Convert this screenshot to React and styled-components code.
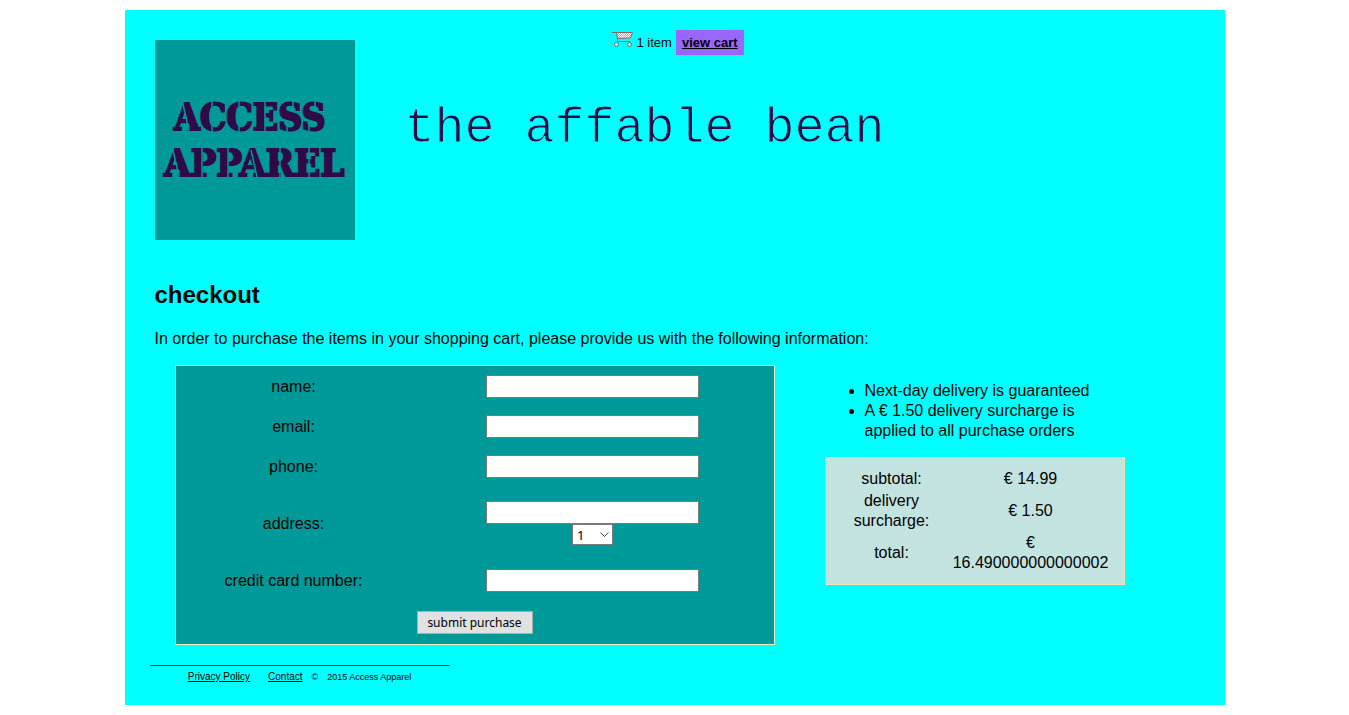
import React from 'react';
import styled, { createGlobalStyle } from 'styled-components';

const GlobalStyle = createGlobalStyle`
  body {
    margin: 10px;
    background: #fff;
    color: #000;
    font: 16px/20px "Liberation Sans", Arial, sans-serif;
  }
`;

const Page = styled.div`
  max-width: 1100px;
  margin: 0 auto;
  background: #00ffff;
`;

const Header = styled.header`
  display: flex;
  gap: 50px;
  padding: 20px 30px 0;
`;

const LogoLink = styled.a`
  flex: none;
  margin-top: 10px;
  height: 200px;
  svg { display: block; }
`;

const Banner = styled.div`
  flex: 1;
`;

const CartBar = styled.div`
  display: flex;
  align-items: center;
  gap: 4px;
  padding-left: 207px;
  font-size: 13px;
  line-height: 15px;
`;

const CartIcon = styled.svg`
  margin-bottom: 6px;
`;

const ViewCart = styled.a`
  padding: 5px 6px;
  background: #9966ff;
  color: #000;
  font-weight: bold;
`;

const SiteName = styled.h1`
  margin: 44px 0 0;
  font: 50px/60px "Liberation Mono", "Courier New", monospace;
  color: #2e0a46;
  -webkit-text-stroke: 1px #00ffff;
  white-space: nowrap;
`;

const Content = styled.main`
  padding: 41px 30px 0;
`;

const Heading = styled.h2`
  margin: 0 0 20px;
  font-size: 24px;
  line-height: 28px;
`;

const Intro = styled.p`
  margin: 0 0 16px;
`;

const Columns = styled.div`
  display: flex;
  align-items: flex-start;
  gap: 50px;
  margin-left: 20px;
`;

const CheckoutForm = styled.form`
  box-sizing: border-box;
  flex: 0 1 600px;
  border: 1px solid #f5eabe;
  background: #009999;
`;

const FormTable = styled.table`
  width: 100%;
  border-collapse: collapse;
  table-layout: fixed;
  td { padding: 0; text-align: center; }
  td + td { padding-bottom: 1px; }
`;

const LabelColumn = styled.col`
  width: 236px;
`;

const FormRow = styled.tr`
  height: ${({ $height }) => $height || 40}px;
`;

const TextInput = styled.input`
  box-sizing: border-box;
  display: block;
  width: 213px;
  height: 23px;
  margin: 0 auto;
  padding: 2px;
  border: 1px solid #7a7a7a;
  border-radius: 0;
  background: #fff;
  font: 13px "Noto Sans", sans-serif;
`;

const SelectWrap = styled.div`
  display: grid;
  width: 41px;
  margin: 0 auto;
  align-items: center;
  > * { grid-area: 1 / 1; }
  svg { justify-self: end; margin-right: 4px; pointer-events: none; }
`;

const RegionSelect = styled.select`
  box-sizing: border-box;
  width: 41px;
  height: 21px;
  padding: 0 4px;
  appearance: none;
  border: 1px solid #7a7a7a;
  border-radius: 0;
  background: #fff;
  color: #000;
  font: 13px "Noto Sans", sans-serif;
`;

const SubmitButton = styled.button`
  box-sizing: border-box;
  width: 116px;
  height: 23px;
  padding: 0;
  border: 1px solid #adadad;
  border-radius: 0;
  background: #e1e1e1;
  color: #000;
  font: 12px "Noto Sans", sans-serif;
`;

const Sidebar = styled.aside`
  flex: 0 0 300px;
`;

const Notes = styled.ul`
  margin: 16px 0;
  padding-left: 40px;
`;

const Totals = styled.table`
  box-sizing: border-box;
  width: 100%;
  padding: 9px;
  border: 1px solid #f5deb3;
  border-spacing: 2px;
  table-layout: fixed;
  background: #c3e3e0;
  th, td { padding: 0; font-weight: normal; text-align: center; }
  th { width: 110px; }
`;

const Footer = styled.footer`
  display: flex;
  justify-content: center;
  gap: 9px;
  box-sizing: border-box;
  width: 300px;
  margin: 20px 25px 0;
  padding: 5px 0 22px;
  border-top: 1px solid #333;
  font-size: 9px;
  line-height: 12px;
`;

const FooterLink = styled.a`
  color: #000;
  font-size: 10px;
  &:first-child { margin-right: 9px; }
`;

const Logo = () => (
  <svg width="200" height="200" viewBox="0 0 200 200" role="img" aria-label="Access Apparel">
    <rect width="200" height="200" fill="#009999" />
    <g fill="#2e0a46" stroke="#2e0a46" strokeWidth="2" fontFamily='"DejaVu Serif Condensed", "DejaVu Serif", serif' fontWeight="bold">
      <text x="19" y="90" fontSize="37">ACCESS</text>
      <text x="9" y="136" fontSize="38">APPAREL</text>
    </g>
    {/* stencil bridges */}
    <g fill="none" stroke="#009999" strokeWidth="1.5">
      <path d="M28 64l6 27M57 61v31M84 61v31M110 61v31M138 60v9M132 84v9M160 60v9M154 84v9" />
      <path d="M18 110l6 27M47 107v30M73 107v30M96 110l6 27M125 107v30M154 107v30" />
    </g>
  </svg>
);

const Cart = () => (
  <CartIcon width="21" height="17" viewBox="0 0 21 17" aria-hidden="true">
    <defs>
      <pattern id="mesh" width="2" height="2" patternUnits="userSpaceOnUse">
        <rect width="2" height="2" fill="#fff" />
        <path d="M0 0h1v1H0zM1 1h1v1H1z" fill="#c4a8a4" />
      </pattern>
    </defs>
    <path d="M4 1.500h16.500l-2 6H6z" fill="url(#mesh)" />
    <path d="M0 1.500h20.500l-2 5.500-13 .5M4.500 2l1 5.500v3h12.500" fill="none" stroke="#806868" />
    <circle cx="4.500" cy="13.500" r="2" fill="#bff" stroke="#806868" />
    <circle cx="17.500" cy="13.500" r="2" fill="#bff" stroke="#806868" />
  </CartIcon>
);

const fields = [
  { id: 'name', label: 'name:', height: 41 },
  { id: 'email', label: 'email:', type: 'email' },
  { id: 'phone', label: 'phone:', type: 'tel' },
  { id: 'address', label: 'address:', height: 73, region: true },
  { id: 'creditcard', label: 'credit card number:', height: 41 },
];

const totals = [
  ['subtotal:', '€ 14.99'],
  ['delivery surcharge:', '€ 1.50'],
  ['total:', '€ 16.490000000000002'],
];

export default function App() {
  return (
    <>
      <GlobalStyle />
      <Page>
        <Header>
          <LogoLink href="#"><Logo /></LogoLink>
          <Banner>
            <CartBar>
              <Cart />
              <span>1 item</span>
              <ViewCart href="#cart">view cart</ViewCart>
            </CartBar>
            <SiteName>the affable bean</SiteName>
          </Banner>
        </Header>
        <Content>
          <Heading>checkout</Heading>
          <Intro>
            In order to purchase the items in your shopping cart, please provide us with the following information:
          </Intro>
          <Columns>
            <CheckoutForm onSubmit={(e) => e.preventDefault()}>
              <FormTable>
                <colgroup><LabelColumn /><col /></colgroup>
                <tbody>
                  {fields.map((f) => (
                    <FormRow key={f.id} $height={f.height}>
                      <td><label htmlFor={f.id}>{f.label}</label></td>
                      <td>
                        <TextInput id={f.id} name={f.id} type={f.type || 'text'} />
                        {f.region && (
                          <SelectWrap>
                            <RegionSelect name="region" aria-label="region" defaultValue="1">
                              {[1, 2, 3, 4, 5, 6, 7, 8, 9, 10].map((n) => <option key={n}>{n}</option>)}
                            </RegionSelect>
                            <svg width="9" height="6" viewBox="0 0 9 6" aria-hidden="true">
                              <path d="M.5.5l4 4 4-4" fill="none" stroke="#444" />
                            </svg>
                          </SelectWrap>
                        )}
                      </td>
                    </FormRow>
                  ))}
                  <FormRow $height={43}>
                    <td colSpan={2}><SubmitButton type="submit">submit purchase</SubmitButton></td>
                  </FormRow>
                </tbody>
              </FormTable>
            </CheckoutForm>
            <Sidebar>
              <Notes>
                <li>Next-day delivery is guaranteed</li>
                <li>A € 1.50 delivery surcharge is applied to all purchase orders</li>
              </Notes>
              <Totals>
                <tbody>
                  {totals.map(([label, amount]) => (
                    <tr key={label}><th scope="row">{label}</th><td>{amount}</td></tr>
                  ))}
                </tbody>
              </Totals>
            </Sidebar>
          </Columns>
        </Content>
        <Footer>
          <FooterLink href="#privacy">Privacy Policy</FooterLink>
          <FooterLink href="#contact">Contact</FooterLink>
          <span>©</span>
          <span>2015 Access Apparel</span>
        </Footer>
      </Page>
    </>
  );
}
